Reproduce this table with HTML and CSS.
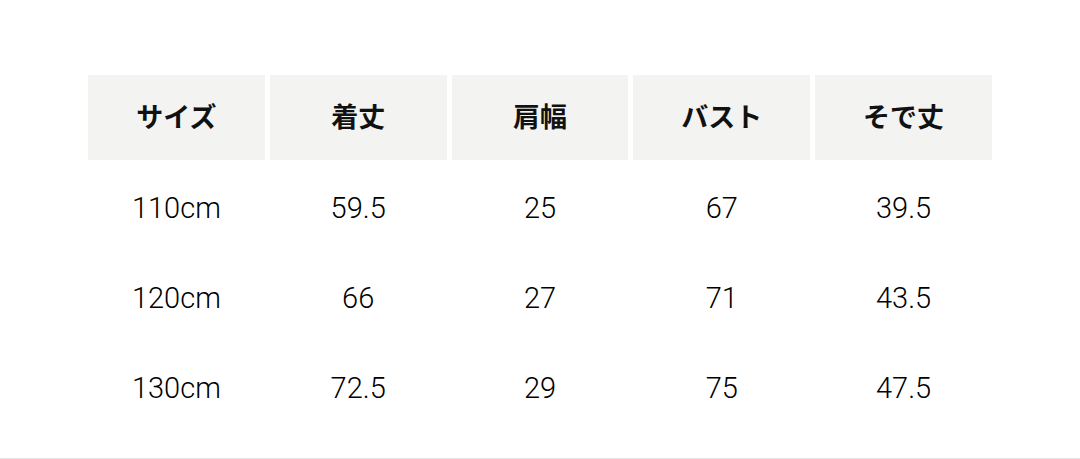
FILE: index.html
```html
<!DOCTYPE html>
<html lang="ja">
<head>
<meta charset="utf-8">
<link rel="stylesheet" href="styles.css">
</head>
<body>
<div class="page">
  <table class="size-table">
    <thead>
      <tr><th>サイズ</th><th>着丈</th><th>肩幅</th><th>バスト</th><th>そで丈</th></tr>
    </thead>
    <tbody>
      <tr><td>110cm</td><td>59.5</td><td>25</td><td>67</td><td>39.5</td></tr>
      <tr><td>120cm</td><td>66</td><td>27</td><td>71</td><td>43.5</td></tr>
      <tr><td>130cm</td><td>72.5</td><td>29</td><td>75</td><td>47.5</td></tr>
    </tbody>
  </table>
</div>
</body>
</html>
```
FILE: styles.css
```css
html, body {
  margin: 0;
  padding: 0;
  background: #fff;
}
.page {
  box-sizing: border-box;
  height: 459px;
  padding: 70px 0 0 83px;
  border-bottom: 1px solid #e4e4e4;
  font-family: "Noto Sans CJK JP", "Noto Sans", sans-serif;
  color: #111;
}
.size-table {
  border-collapse: separate;
  border-spacing: 5px;
  width: 914px;
  table-layout: fixed;
}
.size-table th,
.size-table td {
  box-sizing: border-box;
  height: 85px;
  padding: 0;
  text-align: center;
  vertical-align: middle;
}
.size-table th {
  background: #f3f3f1;
  font-size: 27px;
  line-height: 1;
  font-weight: 700;
  color: #111;
  padding-bottom: 4px;
}
.size-table td {
  font-family: Roboto, "Liberation Sans", sans-serif;
  font-size: 29px;
  line-height: 1;
  font-weight: 300;
  color: #000;
  padding-top: 1px;
}
```
